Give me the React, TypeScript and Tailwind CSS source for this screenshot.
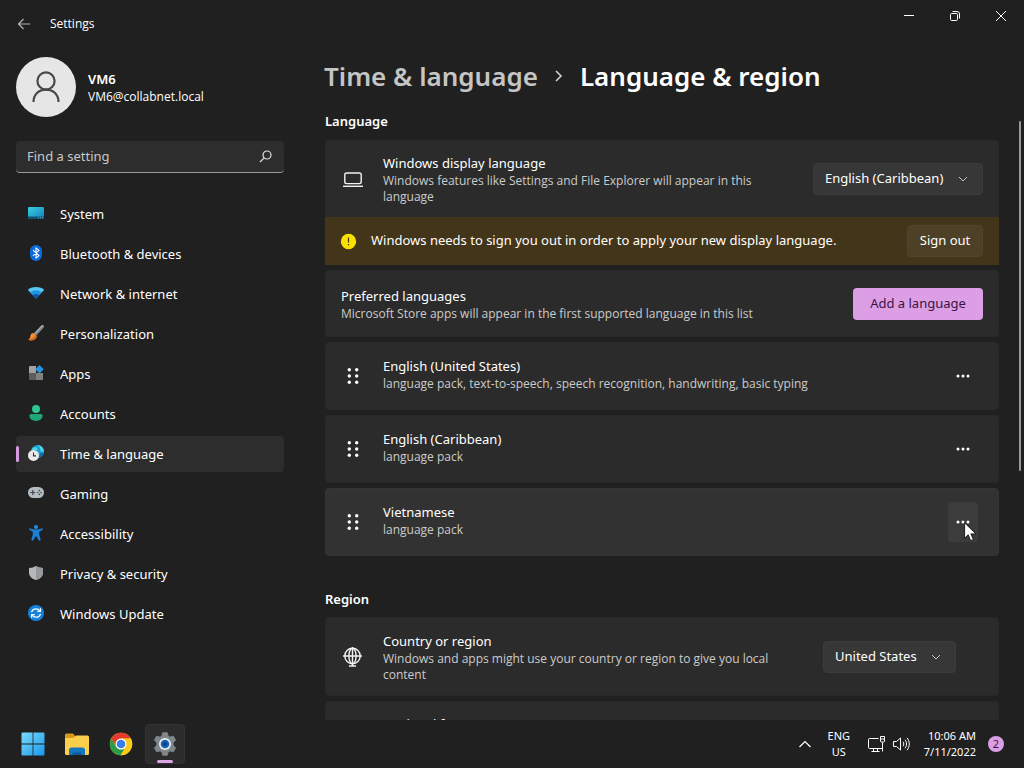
import { ReactNode } from "react"

const SystemIcon = () => (
    <svg width="16" height="16" viewBox="0 0 16 16">
        <defs>
            <linearGradient id="sys" x1="0" y1="0" x2="1" y2="1">
                <stop offset="0" stopColor="#35d0d8" />
                <stop offset="1" stopColor="#1580c4" />
            </linearGradient>
        </defs>
        <rect x="0" y="2" width="16" height="12" rx="1" fill="url(#sys)" />
        <path d="M0 11.5h16V13a1 1 0 0 1-1 1H1a1 1 0 0 1-1-1z" fill="#0f5275" />
        <path d="M10 12.7h1M12 12.7h1M14 12.7h1" stroke="#6fc6e6" strokeWidth="0.8" />
    </svg>
)

const BluetoothIcon = () => (
    <svg width="16" height="16" viewBox="0 0 16 16">
        <rect x="2" y="0" width="12" height="16" rx="6" fill="#0a6cdc" />
        <path d="M5 5.2l6 5.4L8 13.2V2.8l3 2.6-6 5.4" fill="none" stroke="#fff" strokeWidth="1.1" strokeLinejoin="round" />
    </svg>
)

const NetworkIcon = () => (
    <svg width="16" height="16" viewBox="0 0 16 16">
        <path d="M8 13.500L.4 5.400a1 1 0 0 1 .1-1.300C4.700 1.200 11.300 1.200 15.500 4.100a1 1 0 0 1 .1 1.300z" fill="#55c8f2" />
        <path d="M8 13.500L2.300 7.500C5.600 4.600 10.400 4.600 13.700 7.500z" fill="#1f93e2" />
        <path d="M8 13.500L4.800 10.100C6.600 8.500 9.400 8.500 11.200 10.100z" fill="#0b55b0" />
    </svg>
)

const BrushIcon = () => (
    <svg width="16" height="16" viewBox="0 0 16 16">
        <path d="M15.600.4c-.7-.7-1.700-.4-2.300.2L6 8.300 8.200 10.500 15.300 2.800c.6-.7.9-1.700.3-2.400z" fill="#a3aab0" />
        <path d="M15.600.4L7 9.400l1.200 1.100 7.100-7.700c.6-.7.9-1.800.3-2.400z" fill="#737c84" />
        <path d="M5.600 7.900c-2 0-3 1.300-3.200 3C2.200 12.600 1.400 14 .2 14.800c2.600 1.300 8.300.8 8.600-3.800z" fill="#ef9035" />
        <path d="M.2 14.800c2.600 1.300 8.300.8 8.600-3.800L7.600 9.800C7 12.800 4 14.500.2 14.800z" fill="#c7611a" />
    </svg>
)

const AppsIcon = () => (
    <svg width="16" height="16" viewBox="0 0 16 16">
        <path d="M2 1h6v7H1V2a1 1 0 0 1 1-1z" fill="#a2a2a2" />
        <path d="M1 8h7v7H2a1 1 0 0 1-1-1z" fill="#5d5d5d" />
        <path d="M8 8h7v6a1 1 0 0 1-1 1H8z" fill="#818181" />
        <rect x="8.500" y="1.200" width="6" height="6" rx="1" transform="rotate(45 11.500 4.200)" fill="#2495e3" />
    </svg>
)

const AccountsIcon = () => (
    <svg width="16" height="16" viewBox="0 0 16 16">
        <circle cx="8" cy="4" r="4" fill="#2fc694" />
        <path d="M3 9h10a1.600 1.600 0 0 1 1.600 1.600C14.600 14 11.800 16 8 16s-6.600-2-6.600-5.400A1.600 1.600 0 0 1 3 9z" fill="#1ea57c" />
    </svg>
)

const TimeIcon = () => (
    <svg width="16" height="16" viewBox="0 0 16 16">
        <circle cx="9.500" cy="6.500" r="6.500" fill="#1e9fd0" />
        <path d="M9.500 0a6.500 6.500 0 0 1 6.500 6.500h-3.400C12.600 3.500 11.500 1 9.500 0zM3.300 5h6V2.500H5z" fill="#55d3e6" />
        <path d="M12 8h3.500l-2 4H11z" fill="#0d6fa9" />
        <circle cx="5.500" cy="10.400" r="5.500" fill="#e9e9ec" />
        <path d="M5.500 7.500v3.400H8" fill="none" stroke="#333" strokeWidth="1.100" />
    </svg>
)

const GamingIcon = () => (
    <svg width="16" height="16" viewBox="0 0 16 16">
        <rect x="0" y="2" width="16" height="11" rx="5.500" fill="#b3bcc1" />
        <path d="M4.800 5v5M2.300 7.500h5" stroke="#3e474c" strokeWidth="1.200" />
        <circle cx="9.800" cy="7.500" r="0.800" fill="#3e474c" />
        <circle cx="13" cy="7.500" r="0.800" fill="#3e474c" />
        <circle cx="11.400" cy="5.600" r="0.800" fill="#3e474c" />
        <circle cx="11.400" cy="9.400" r="0.800" fill="#3e474c" />
    </svg>
)

const AccessibilityIcon = () => (
    <svg width="16" height="16" viewBox="0 0 16 16">
        <circle cx="8" cy="2" r="2" fill="#2b8fe0" />
        <path d="M2.300 3.400L6.500 4.600h3l4.200-1.200c1-.3 1.600 1.200.6 1.700L11.200 6.800v2.800l1.400 5c.2 1-1.700 1.500-2.100.5L8.600 11.500H7.400l-1.900 3.600c-.4 1-2.300.5-2.100-.5l1.400-5V6.800L1.700 5.100c-1-.5-.4-2 .6-1.700z" fill="#1a80d8" />
    </svg>
)

const ShieldIcon = () => (
    <svg width="16" height="16" viewBox="0 0 16 16">
        <path d="M8 1c2 1.300 4.300 1.800 7 2v4.500c0 4-3 6.300-7 7.500-4-1.200-7-3.500-7-7.500V3c2.700-.2 5-.7 7-2z" fill="#b5b8ba" />
        <path d="M8 1c2 1.300 4.300 1.800 7 2v4.500c0 4-3 6.300-7 7.500z" fill="#96999b" />
    </svg>
)

const UpdateIcon = () => (
    <svg width="16" height="16" viewBox="0 0 16 16">
        <circle cx="8" cy="8" r="8" fill="#1583dc" />
        <path d="M3.600 7.200C4.200 5 6 3.800 8 3.800c1.500 0 2.800.7 3.700 1.900M12.400 8.800C11.800 11 10 12.200 8 12.200c-1.500 0-2.800-.7-3.700-1.900" fill="none" stroke="#fff" strokeWidth="1.300" />
        <path d="M12.400 3.200v3.200H9.200M3.600 12.800V9.600h3.200" fill="none" stroke="#fff" strokeWidth="1.200" />
    </svg>
)

const ChevronDown = () => (
    <svg width="10" height="10" viewBox="0 0 10 10" fill="none" stroke="#c8c8c8">
        <path d="M1 3l4 4 4-4" />
    </svg>
)

const LaptopIcon = () => (
    <svg width="20" height="20" viewBox="0 0 20 20" fill="none" stroke="#f2f2f2" strokeWidth="1.400">
        <rect x="1.800" y="4" width="16.400" height="10.600" rx="1.800" />
        <path d="M0 17.300h20" />
    </svg>
)

const GlobeIcon = () => (
    <svg width="20" height="20" viewBox="0 0 20 20" fill="none" stroke="#f2f2f2" strokeWidth="1.400">
        <circle cx="9.500" cy="9" r="7.700" />
        <ellipse cx="9.500" cy="9" rx="3.600" ry="7.700" />
        <path d="M0 9h19M9.500 0v19M6 19h7" />
    </svg>
)

const DragDots = () => (
    <svg width="20" height="20" viewBox="0 0 20 20" fill="#fff">
        <circle cx="6.300" cy="3.700" r="1.700" />
        <circle cx="13.700" cy="3.700" r="1.700" />
        <circle cx="6.300" cy="10" r="1.700" />
        <circle cx="13.700" cy="10" r="1.700" />
        <circle cx="6.300" cy="16.300" r="1.700" />
        <circle cx="13.700" cy="16.300" r="1.700" />
    </svg>
)

const Cursor = () => (
    <svg width="13" height="20" viewBox="0 0 13 20" className="pointer-events-none absolute left-4 top-5">
        <path d="M.6.800v15.400l3.600-3.400 2.500 5.900 2.700-1.100-2.500-5.700h5z" fill="#fff" stroke="#111" strokeWidth="0.900" />
    </svg>
)

const navItems = [
    { label: "System", icon: <SystemIcon /> },
    { label: "Bluetooth & devices", icon: <BluetoothIcon /> },
    { label: "Network & internet", icon: <NetworkIcon /> },
    { label: "Personalization", icon: <BrushIcon /> },
    { label: "Apps", icon: <AppsIcon /> },
    { label: "Accounts", icon: <AccountsIcon /> },
    { label: "Time & language", icon: <TimeIcon />, active: true },
    { label: "Gaming", icon: <GamingIcon /> },
    { label: "Accessibility", icon: <AccessibilityIcon /> },
    { label: "Privacy & security", icon: <ShieldIcon /> },
    { label: "Windows Update", icon: <UpdateIcon /> },
]

const languages = [
    { name: "English (United States)", features: "language pack, text-to-speech, speech recognition, handwriting, basic typing" },
    { name: "English (Caribbean)", features: "language pack" },
    { name: "Vietnamese", features: "language pack", hovered: true },
]

const TitleBar = () => (
    <header className="flex h-12 shrink-0 justify-between">
        <div className="flex items-center pl-4">
            <button type="button" aria-label="Back" className="flex size-4 items-center justify-center">
                <svg width="14" height="12" viewBox="0 0 14 12" fill="none" stroke="#b4b4b4" strokeWidth="1.200">
                    <path d="M13 6H1.500M6.500 1l-5 5 5 5" />
                </svg>
            </button>
            <span className="pl-[18px] font-['Open_Sans',sans-serif] text-xs">Settings</span>
        </div>
        <div className="flex h-8">
            <button type="button" aria-label="Minimize" className="flex w-[46px] items-center justify-center">
                <svg width="10" height="10" viewBox="0 0 10 10" stroke="#fff"><path d="M0 4.500h10" /></svg>
            </button>
            <button type="button" aria-label="Restore" className="flex w-[46px] items-center justify-center">
                <svg width="10" height="10" viewBox="0 0 10 10" fill="none" stroke="#fff">
                    <rect x="0.500" y="2.500" width="7" height="7" rx="1.200" />
                    <path d="M2.500.5H7A2.500 2.500 0 0 1 9.500 3v4.500" />
                </svg>
            </button>
            <button type="button" aria-label="Close" className="flex w-[46px] items-center justify-center">
                <svg width="10" height="10" viewBox="0 0 10 10" stroke="#fff"><path d="M0 0l10 10M10 0L0 10" /></svg>
            </button>
        </div>
    </header>
)

const Sidebar = () => (
    <aside className="w-[284px] shrink-0 pl-4 pt-[9px]">
        <div className="flex items-center gap-3">
            <div className="flex size-[60px] items-center justify-center rounded-full bg-[#e6e6e6]">
                <svg width="28" height="32" viewBox="0 0 28 32" fill="none" stroke="#484848" strokeWidth="2.200">
                    <circle cx="14" cy="10" r="8.600" />
                    <path d="M1.500 31c0-7.500 5.200-12.400 12.500-12.400S26.500 23.500 26.500 31" />
                </svg>
            </div>
            <div>
                <div className="text-[13px] font-semibold leading-5">VM6</div>
                <div className="font-['Open_Sans',sans-serif] text-xs leading-4">VM6@collabnet.local</div>
            </div>
        </div>
        <div className="mt-6 flex h-8 items-center rounded border-b border-[#9a9a9a] bg-[#2d2d2d] pl-[11px] pr-3">
            <input
                type="text"
                aria-label="Find a setting"
                placeholder="Find a setting"
                className="min-w-0 flex-1 bg-transparent text-[13px] outline-none placeholder:text-[#c8c8c8]"
            />
            <svg width="13" height="13" viewBox="0 0 13 13" fill="none" stroke="#e0e0e0" strokeWidth="1.200">
                <circle cx="8" cy="5" r="4" />
                <path d="M5.200 7.800L1 12" />
            </svg>
        </div>
        <nav className="mt-[23px] flex flex-col gap-1">
            {navItems.map((item) => (
                <a
                    key={item.label}
                    href="#"
                    className={`flex h-9 items-center rounded text-[13px] ${item.active ? "bg-[#2d2d2d]" : ""}`}
                >
                    <span className={`h-4 w-[3px] rounded-full ${item.active ? "bg-[#d49be0]" : ""}`}></span>
                    <span className="pb-0.5 pl-[9px]">{item.icon}</span>
                    <span className="pl-4 pt-0.5">{item.label}</span>
                </a>
            ))}
        </nav>
    </aside>
)

const CardText = ({ title, text }: { title: string; text: string }) => (
    <div className="min-w-0 flex-1 pr-12">
        <h3 className="text-[13px] leading-5">{title}</h3>
        <p className="font-['Open_Sans',sans-serif] text-xs leading-4 text-[#cbcbcb]">{text}</p>
    </div>
)

const Select = ({ label, value, width }: { label: string; value: string; width: string }) => (
    <div className={`relative ${width}`}>
        <select
            aria-label={label}
            defaultValue={value}
            className="h-8 w-full appearance-none rounded border border-[#3c3c3c] bg-[#373737] pl-[11px] text-[13px] text-white"
        >
            <option>{value}</option>
        </select>
        <span className="pointer-events-none absolute right-[15px] top-[11px]"><ChevronDown /></span>
    </div>
)

const SectionTitle = ({ children }: { children: ReactNode }) => (
    <h2 className="text-[13px] font-semibold leading-5">{children}</h2>
)

const LanguageRow = ({ name, features, hovered }: { name: string; features: string; hovered?: boolean }) => (
    <li className={`flex h-[68px] items-center rounded border pl-[17px] pr-5 ${hovered ? "border-[#353535] bg-[#323232]" : "border-[#282828] bg-[#2b2b2b]"}`}>
        <DragDots />
        <div className="min-w-0 flex-1 pb-1 pl-5">
            <CardText title={name} text={features} />
        </div>
        <button
            type="button"
            aria-label={`More options for ${name}`}
            className={`relative flex h-10 w-[30px] items-center justify-center rounded ${hovered ? "bg-[#3c3c3c]" : ""}`}
        >
            <svg width="14" height="4" viewBox="0 0 14 4" fill="#fff">
                <circle cx="2" cy="2" r="1.500" />
                <circle cx="7" cy="2" r="1.500" />
                <circle cx="12" cy="2" r="1.500" />
            </svg>
            {hovered && <Cursor />}
        </button>
    </li>
)

const Content = () => (
    <main className="flex min-w-0 flex-1 flex-col pl-10">
        <h1 className="flex shrink-0 items-center pt-2 text-[26px] font-semibold leading-10">
            <a href="#" className="text-[#c5c5c5]">Time &amp; language</a>
            <svg width="10" height="12" viewBox="0 0 10 12" fill="none" stroke="#d0d0d0" strokeWidth="1.600" className="mx-4">
                <path d="M2 1l5 5-5 5" />
            </svg>
            <span>Language &amp; region</span>
        </h1>
        <div className="flex min-h-0 flex-1 overflow-hidden pl-px pt-[15px]">
            <div className="min-w-0 flex-1">
                <SectionTitle>Language</SectionTitle>
                <div className="mt-[9px] flex h-[77px] items-center rounded-t border border-b-0 border-[#282828] bg-[#2b2b2b] pl-[17px] pr-[15px]">
                    <LaptopIcon />
                    <div className="min-w-0 flex-1 pl-5">
                        <CardText
                            title="Windows display language"
                            text="Windows features like Settings and File Explorer will appear in this language"
                        />
                    </div>
                    <Select label="Windows display language" value="English (Caribbean)" width="w-[170px]" />
                </div>
                <div className="flex h-12 items-center bg-[#433519] pl-[15px] pr-4">
                    <svg width="17" height="17" viewBox="0 0 17 17">
                        <circle cx="8.500" cy="8.500" r="7.700" fill="#fbe100" />
                        <path d="M8.500 4.500v5M8.500 11v1.300" stroke="#433519" strokeWidth="1.200" />
                    </svg>
                    <p className="flex-1 pl-3.5 text-[13px]">
                        Windows needs to sign you out in order to apply your new display language.
                    </p>
                    <button type="button" className="h-8 w-[76px] rounded border border-[#524329] bg-[#4e4026] text-[13px]">
                        Sign out
                    </button>
                </div>
                <div className="mt-[5px] flex h-[67px] items-center rounded border border-[#282828] bg-[#2b2b2b] px-[15px]">
                    <CardText
                        title="Preferred languages"
                        text="Microsoft Store apps will appear in the first supported language in this list"
                    />
                    <button type="button" className="h-8 w-[130px] rounded bg-[#dc9fe6] text-[13px] text-[#3a1442]">
                        Add a language
                    </button>
                </div>
                <ul className="mt-[5px] flex flex-col gap-[5px]">
                    {languages.map((language) => (
                        <LanguageRow key={language.name} {...language} />
                    ))}
                </ul>
                <div className="mt-[33px]">
                    <SectionTitle>Region</SectionTitle>
                </div>
                <div className="mt-2 flex h-[79px] items-center rounded border border-[#282828] bg-[#2b2b2b] pl-[17px] pr-[42px]">
                    <GlobeIcon />
                    <div className="min-w-0 flex-1 pl-5">
                        <CardText
                            title="Country or region"
                            text="Windows and apps might use your country or region to give you local content"
                        />
                    </div>
                    <Select label="Country or region" value="United States" width="w-[133px]" />
                </div>
                <div className="mt-[5px] h-[79px] rounded border border-[#282828] bg-[#2b2b2b] pl-[57px] pt-3">
                    <h3 className="text-[13px] leading-5">Regional format</h3>
                </div>
            </div>
            <div className="ml-5 mr-[3px] mt-2.5 h-[350px] w-[2px] rounded-full bg-[#9a9a9a]"></div>
        </div>
    </main>
)

const Taskbar = () => (
    <footer className="flex h-12 shrink-0 items-center justify-between pl-[13px] pr-5">
        <div className="flex items-center gap-1">
            <button type="button" aria-label="Start" className="flex size-10 items-center justify-center">
                <svg width="24" height="24" viewBox="0 0 24 24">
                    <defs>
                        <linearGradient id="win" x1="0" y1="0" x2="24" y2="24" gradientUnits="userSpaceOnUse">
                            <stop offset="0" stopColor="#7fdcfb" />
                            <stop offset="1" stopColor="#1597ea" />
                        </linearGradient>
                    </defs>
                    <path d="M1.500.5H11.600V11.600H.5V1.500a1 1 0 0 1 1-1zM12.400.5h10.100a1 1 0 0 1 1 1v10.100H12.400zM.5 12.400h11.100v11.100H1.500a1 1 0 0 1-1-1zM12.400 12.400h11.100v10.100a1 1 0 0 1-1 1H12.400z" fill="url(#win)" />
                </svg>
            </button>
            <button type="button" aria-label="File Explorer" className="flex size-10 items-center justify-center">
                <svg width="24" height="24" viewBox="0 0 24 24">
                    <path d="M0 3a1.500 1.500 0 0 1 1.500-1.500H8L11 5v4H0z" fill="#d9981a" />
                    <path d="M0 6h8l3-2.500h11.500A1.500 1.500 0 0 1 24 5v16.500a1.500 1.500 0 0 1-1.500 1.500h-21A1.500 1.500 0 0 1 0 21.500z" fill="#fbcf4b" />
                    <path d="M4 23v-5a2.500 2.500 0 0 1 2.500-2.500h11A2.500 2.500 0 0 1 20 18v5z" fill="#1577bf" />
                    <path d="M7.500 23v-2.500h9V23z" fill="#0d5a9c" />
                </svg>
            </button>
            <button type="button" aria-label="Chrome" className="flex size-10 items-center justify-center">
                <svg width="24" height="24" viewBox="0 0 24 24">
                    <circle cx="12" cy="12" r="11.200" fill="#fbc919" />
                    <path d="M2.300 6.400A11.200 11.200 0 0 1 21.700 6.400L12 6.800 7.500 14.600z" fill="#e33b2e" />
                    <path d="M2.300 6.400L7.200 14.700 12 17.200h4.500L11.500 23.200A11.200 11.200 0 0 1 2.300 6.400z" fill="#2a9b47" />
                    <path d="M12 6.600h9.800A11.200 11.200 0 0 1 11.500 23.200L16.500 15z" fill="#fbc919" />
                    <circle cx="12" cy="12" r="5.500" fill="#fff" />
                    <circle cx="12" cy="12" r="4.300" fill="#3b7ded" />
                </svg>
            </button>
            <button type="button" aria-label="Settings" className="flex size-10 flex-col items-center justify-between rounded border border-[#333] bg-[#2c2c2c] pt-[7px]">
                <svg width="24" height="24" viewBox="0 0 24 24">
                    <path d="M9.700.8h4.600l.8 3.300 1.900 1.100 3.300-1 2.300 4-2.500 2.400v2.800l2.500 2.400-2.300 4-3.300-1-1.900 1.100-.8 3.300H9.700l-.8-3.300L7 18.800l-3.300 1-2.300-4 2.500-2.400v-2.800L1.400 8.200l2.300-4 3.300 1 1.900-1.100z" fill="#81868b" stroke="#81868b" strokeLinejoin="round" />
                    <circle cx="12" cy="12" r="6" fill="#e8edf2" />
                    <circle cx="12" cy="12" r="4.300" fill="#1663b4" />
                    <circle cx="12" cy="12" r="2" fill="#0d3f86" />
                </svg>
                <span className="h-[3px] w-4 rounded-full bg-[#dba6e3]"></span>
            </button>
        </div>
        <div className="flex items-center text-[11px] leading-4">
            <button type="button" aria-label="Show hidden icons">
                <svg width="12" height="8" viewBox="0 0 12 8" fill="none" stroke="#fff" strokeWidth="1.200"><path d="M.5 7L6 1.500 11.500 7" /></svg>
            </button>
            <button type="button" className="ml-4 w-6 text-center">ENG US</button>
            <button type="button" aria-label="Network and volume" className="ml-[17px] flex items-center gap-2">
                <svg width="17" height="17" viewBox="0 0 17 17" fill="none" stroke="#fff">
                    <path d="M10.500 2.500h-9a1 1 0 0 0-1 1v8a1 1 0 0 0 1 1h13M5.500 12.500v3M9.500 12.500v3M3.500 15.500h8M14.500 6.500v9M12.500.5h4v4.500a1 1 0 0 1-1 1h-2a1 1 0 0 1-1-1zM12.500 3h4" />
                </svg>
                <svg width="17" height="16" viewBox="0 0 17 16" fill="none" stroke="#fff">
                    <path d="M.5 5.500h3l4-3.500v12l-4-3.500h-3z" strokeLinejoin="round" />
                    <path d="M10 5.700c1 1.400 1 3.200 0 4.600M12 3.700c2 2.600 2 6 0 8.600M14 1.800c3 3.700 3 8.700 0 12.400" />
                </svg>
            </button>
            <button type="button" className="ml-3.5 text-right">10:06 AM<br />7/11/2022</button>
            <span className="ml-3 flex size-4 items-center justify-center rounded-full bg-[#dc9fe6] text-[#3a1442]">2</span>
        </div>
    </footer>
)

const App = () => {
    return (
        <div className="flex h-screen flex-col overflow-hidden bg-[#202020] font-['Noto_Sans','Open_Sans',sans-serif] text-white">
            <TitleBar />
            <div className="flex min-h-0 flex-1">
                <Sidebar />
                <Content />
            </div>
            <Taskbar />
        </div>
    )
}

export default App
